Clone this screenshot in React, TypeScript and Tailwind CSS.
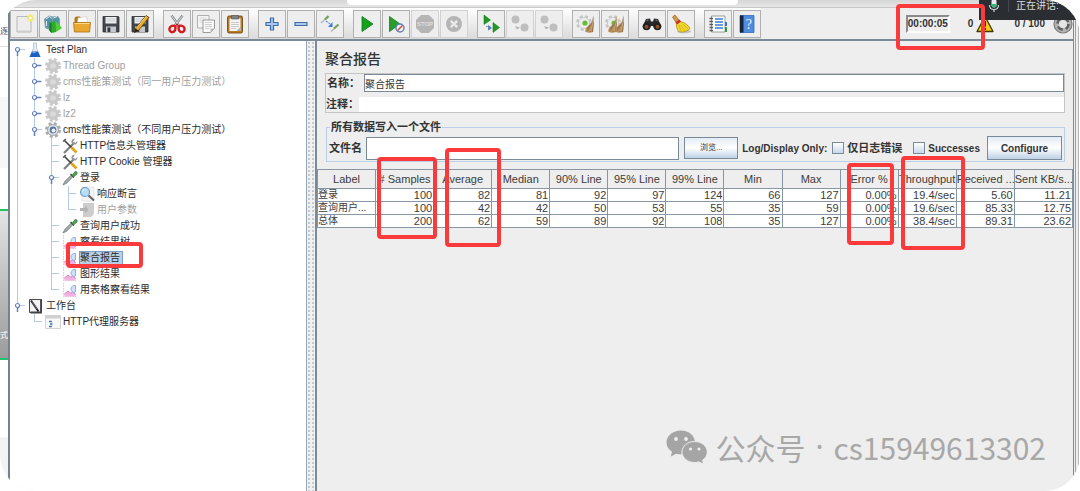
import React, { useState } from "react";

type IconName =
  | "new" | "templates" | "open" | "save" | "saveAs" | "cut" | "copy" | "paste"
  | "plus" | "minus" | "toggle" | "play" | "playNow" | "stop" | "shutdown"
  | "remoteStart" | "remoteStop" | "remoteShutdown" | "clear" | "clearAll"
  | "search" | "broom" | "functions" | "help";

type TreeIconName = "flask" | "gearOff" | "gear" | "tools" | "pipette" | "magnifier" | "pageOff" | "chart" | "bench" | "server";

type TreeNode = {
  label: string;
  icon: TreeIconName;
  // one char per level: "|" line, "t" tee, "e" elbow, "c" closed handle, f/o/l open handle (first, middle, last)
  guides: string;
  disabled?: boolean;
};

const toolbarGroups: { name: IconName; label: string; disabled?: boolean }[][] = [
  [
    { name: "new", label: "New" },
    { name: "templates", label: "Templates" },
    { name: "open", label: "Open" },
    { name: "save", label: "Save" },
    { name: "saveAs", label: "Save as" },
  ],
  [
    { name: "cut", label: "Cut" },
    { name: "copy", label: "Copy" },
    { name: "paste", label: "Paste" },
  ],
  [
    { name: "plus", label: "Expand all" },
    { name: "minus", label: "Collapse all" },
    { name: "toggle", label: "Toggle" },
  ],
  [
    { name: "play", label: "Start" },
    { name: "playNow", label: "Start no pauses" },
    { name: "stop", label: "Stop", disabled: true },
    { name: "shutdown", label: "Shutdown", disabled: true },
  ],
  [
    { name: "remoteStart", label: "Remote start all" },
    { name: "remoteStop", label: "Remote stop all", disabled: true },
    { name: "remoteShutdown", label: "Remote shutdown all", disabled: true },
  ],
  [
    { name: "clear", label: "Clear" },
    { name: "clearAll", label: "Clear all" },
  ],
  [
    { name: "search", label: "Search" },
    { name: "broom", label: "Reset search" },
  ],
  [
    { name: "functions", label: "Function helper" },
    { name: "help", label: "Help" },
  ],
];

const tree: TreeNode[] = [
  { label: "Test Plan", icon: "flask", guides: "f" },
  { label: "Thread Group", icon: "gearOff", guides: "|c", disabled: true },
  { label: "cms性能策测试（同一用户压力测试）", icon: "gearOff", guides: "|c", disabled: true },
  { label: "lz", icon: "gearOff", guides: "|c", disabled: true },
  { label: "lz2", icon: "gearOff", guides: "|c", disabled: true },
  { label: "cms性能策测试（不同用户压力测试）", icon: "gear", guides: "|l" },
  { label: "HTTP信息头管理器", icon: "tools", guides: "| t" },
  { label: "HTTP Cookie 管理器", icon: "tools", guides: "| t" },
  { label: "登录", icon: "pipette", guides: "| o" },
  { label: "响应断言", icon: "magnifier", guides: "| |t" },
  { label: "用户参数", icon: "pageOff", guides: "| |e", disabled: true },
  { label: "查询用户成功", icon: "pipette", guides: "| t" },
  { label: "察看结果树", icon: "chart", guides: "| t" },
  { label: "聚合报告", icon: "chart", guides: "| t" },
  { label: "图形结果", icon: "chart", guides: "| t" },
  { label: "用表格察看结果", icon: "chart", guides: "| e" },
  { label: "工作台", icon: "bench", guides: "l" },
  { label: "HTTP代理服务器", icon: "server", guides: " e" },
];

const columns = [
  "Label", "# Samples", "Average", "Median", "90% Line", "95% Line", "99% Line",
  "Min", "Max", "Error %", "Throughput", "Received ...", "Sent KB/s...",
];

const rows = [
  ["登录", "100", "82", "81", "92", "97", "124", "66", "127", "0.00%", "19.4/sec", "5.60", "11.21"],
  ["查询用户...", "100", "42", "42", "50", "53", "55", "35", "59", "0.00%", "19.6/sec", "85.33", "12.75"],
  ["总体", "200", "62", "59", "89", "92", "108", "35", "127", "0.00%", "38.4/sec", "89.31", "23.62"],
];

const Floppy = () => (
  <>
    <path d="M2 2.5h15.5l.5 1V18H2z" fill="#43474e" stroke="#2b2e33" strokeWidth=".8" />
    <path d="M4.5 3h11v6.500h-11z" fill="#eef0f2" />
    <path d="M5.5 5h9M5.5 7h9" stroke="#b9bdc2" strokeWidth=".8" />
    <path d="M5 12.5h10V18H5z" fill="#c4c8cd" />
    <path d="M6.5 13.5h2.8V18H6.5z" fill="#33373d" />
  </>
);

const PaleGear = () => (
  <>
    <circle cx="8" cy="9" r="6.2" fill="none" stroke="#c3c6c9" strokeWidth="3.4" strokeDasharray="2.8 2.1" />
    <circle cx="8" cy="9" r="5.6" fill="#eceded" stroke="#c0c3c6" strokeWidth=".7" />
    <circle cx="9" cy="9" r="2.6" fill="#69bb3c" />
  </>
);

const Bristles = () => (
  <>
    <path d="M18 1c-.5 3.500-1 5.500-2.500 7.500L10 14l-1 3.500c2.5 1.500 5.500 1.500 8 .5L18 9z" fill="#b9905f" />
    <path d="M17.500 3l-1.500 6-5 8M17 9l-3 9M17.500 8l-1 10M14 11l-3 4" stroke="#80603c" strokeWidth=".6" fill="none" />
    <path d="M17.500 2l-.5 7-2.500 8" stroke="#dfc19a" strokeWidth=".7" fill="none" />
  </>
);

const RemoteDots = () => (
  <>
    <circle cx="5.5" cy="5.5" r="4" fill="#bfbfbf" />
    <circle cx="14.5" cy="13.5" r="4" fill="#bfbfbf" />
    <path d="M5 12l5 1.5-3 2z" fill="#b5b5b5" />
  </>
);

const toolIcons: Record<IconName, React.ReactNode> = {
  new: (
    <>
      <path d="M3 2.5h14V18H3z" fill="#ededee" stroke="#b0b1b2" strokeWidth=".9" />
      <path d="M4.5 17h11" stroke="#c9cacb" />
      <circle cx="16.5" cy="4" r="3.2" fill="#f6ee9a" />
      <path d="M16.5 0v8M12.5 4h8M14 1.5l5 5M19 1.5l-5 5" stroke="#ecdf5c" strokeWidth=".8" />
      <circle cx="16.5" cy="4" r="1.3" fill="#fffde2" />
    </>
  ),
  templates: (
    <>
      <path d="M1 5l5-3.500 4 1L15 2l2 3v9l-6 4-9-4z" fill="#7f9ea6" />
      <path d="M2 5.500L6.500 3 9 5v10l-6-2zM10 5l4-2 2 2-1 8-5 1z" fill="#4f93ad" />
      <path d="M3 5l3.500-2.500L8.500 4M10.500 4L14 2.500M3.500 7v5" stroke="#d8eef3" fill="none" />
      <path d="M6.500 8.500L11 7l2 1.500V18l-4.500 1-2-2.500z" fill="#2fa82c" />
      <path d="M12.500 7l3 3 3.500 4-6 4z" fill="#4fce3b" />
      <path d="M6.500 8.500l2 1.500v9l-2-2.500z" fill="#187a24" />
    </>
  ),
  open: (
    <>
      <path d="M2.5 6V4L4 2.5h4L9.5 4H15v11H2.5z" fill="#b3781b" />
      <path d="M6 4l8.500-1.500L16 11 5 12z" fill="#fff" stroke="#c3c3c3" strokeWidth=".5" />
      <path d="M1.5 8.5h17l-1 9.500h-15z" fill="#e9a930" stroke="#a86e12" strokeWidth=".8" />
      <path d="M2.5 9.5h15" stroke="#ffdc86" />
    </>
  ),
  save: <Floppy />,
  saveAs: (
    <>
      <Floppy />
      <path d="M5.5 14.5L16 1.5l3 2-10.500 13-4 2z" fill="#e9aa23" stroke="#4d3a12" strokeWidth=".8" />
      <path d="M5.5 14.5l3 2-4 2z" fill="#222" />
      <path d="M6.5 14l10-12" stroke="#ffe28a" strokeWidth=".8" />
    </>
  ),
  cut: (
    <>
      <path d="M4.5 1.5L13 13M15.5 1.5L7 13" stroke="#85898d" strokeWidth="2.4" />
      <path d="M4.5 1.5l7 9.500M15.5 1.5l-7 9.500" stroke="#dfe2e4" strokeWidth=".9" />
      <path d="M8.5 12.5c-2-1.500-5.500-1-6 2s2.500 4.500 4.500 3 1.200-3 1.500-5zM11.500 12.500c2-1.500 5.500-1 6 2s-2.500 4.500-4.500 3-1.200-3-1.500-5z" fill="none" stroke="#d6191f" strokeWidth="2.4" />
      <circle cx="10" cy="10.500" r="1" fill="#b0151a" />
    </>
  ),
  copy: (
    <>
      <path d="M1.5 1.5H13V14H1.5z" fill="#f5f5f5" stroke="#a5a7a9" strokeWidth=".9" />
      <path d="M3.5 4h7M3.5 6h4M3.5 8h3" stroke="#cfd1d3" strokeWidth=".8" />
      <path d="M7 6h11.500v8.500l-4 4H7z" fill="#fafafa" stroke="#8e9092" strokeWidth=".9" />
      <path d="M9 8.5h7M9 10.5h7M9 12.5h7M9 14.5h4.500" stroke="#c0c2c4" strokeWidth=".8" />
      <path d="M18.5 14.5h-4v4z" fill="#b9bbbd" />
    </>
  ),
  paste: (
    <>
      <rect x="2.5" y="2" width="15" height="17" rx="1.5" fill="#b97b25" stroke="#744910" strokeWidth=".9" />
      <path d="M4.5 4.500h11V17h-11z" fill="#f4f4f4" />
      <path d="M6 8.5h8M6 10.5h8M6 12.5h8M6 14.5h5" stroke="#bcbfc2" strokeWidth=".8" />
      <path d="M11.5 17l4-4v4z" fill="#aab0b6" />
      <path d="M6.5 1.5h7V5h-7z" fill="#7d8187" stroke="#4f5257" strokeWidth=".6" />
    </>
  ),
  plus: <path d="M8.5 4h3v4.500H16v3h-4.500V16h-3v-4.500H4v-3h4.500z" fill="#a9c8ee" stroke="#3f6ea8" strokeWidth="1.2" />,
  minus: <path d="M4 8.5h12v3H4z" fill="#a9c8ee" stroke="#3f6ea8" strokeWidth="1.2" />,
  toggle: (
    <>
      <path d="M1 9l5-4.500" stroke="#b5b9bb" strokeWidth="1.500" />
      <path d="M5 5.500L8.5 2" stroke="#74a162" strokeWidth="2.400" />
      <path d="M11 17.500l4-3.500" stroke="#b5b9bb" strokeWidth="1.500" />
      <path d="M14 14.500l4.500-4" stroke="#74a162" strokeWidth="2.200" />
      <path d="M6 7l5 3.500" stroke="#5b93df" strokeWidth="1.200" strokeDasharray="2 1" />
      <path d="M12.500 8v5H8z" fill="#3a7bd9" />
    </>
  ),
  play: <path d="M5 2.5L16 10 5 17.5z" fill="#17a01a" stroke="#0d7a12" strokeWidth=".8" />,
  playNow: (
    <>
      <path d="M3.5 2.5L14 10 3.5 17.5z" fill="#2a9e2c" stroke="#147a19" strokeWidth=".8" />
      <circle cx="14" cy="14" r="4" fill="#f3f3f3" stroke="#5b7fb8" strokeWidth="1.4" />
      <path d="M11.500 16.500l5-5" stroke="#d54343" strokeWidth="1.500" />
    </>
  ),
  stop: (
    <>
      <path d="M6 1h8l5 5v8l-5 5H6l-5-5V6z" fill="#b5b5b5" />
      <text x="10" y="12.300" textAnchor="middle" fontSize="6" fontWeight="700" fill="#dedede" fontFamily="Liberation Sans, sans-serif">STOP</text>
    </>
  ),
  shutdown: (
    <>
      <circle cx="10" cy="10" r="8" fill="#b5b5b5" />
      <path d="M6.8 6.8l6.400 6.400M13.200 6.800l-6.400 6.400" stroke="#e9e9e9" strokeWidth="2.400" />
    </>
  ),
  remoteStart: (
    <>
      <path d="M3 1l6.500 5L3 10.500z" fill="#1f9a22" stroke="#0d6c12" strokeWidth=".5" />
      <path d="M12 8.500l6.500 5-6.500 5z" fill="#1f9a22" stroke="#0d6c12" strokeWidth=".5" />
      <path d="M5 12.500h3M7.500 11.500l3 2.500-3 2z" fill="#4a78bd" stroke="#4a78bd" strokeWidth=".7" />
    </>
  ),
  remoteStop: <RemoteDots />,
  remoteShutdown: <RemoteDots />,
  clear: (
    <>
      <PaleGear />
      <Bristles />
    </>
  ),
  clearAll: (
    <>
      <PaleGear />
      <g transform="translate(-6 0)">
        <Bristles />
      </g>
      <g transform="translate(1 0)">
        <Bristles />
      </g>
    </>
  ),
  search: (
    <>
      <path d="M4 5l4-.5 1 3h2l1-3 4 .5 3.500 7.500-7 2.500-1.500-3H9L7.500 15l-7-2.500z" fill="#29292b" />
      <circle cx="4.500" cy="12.500" r="3.800" fill="#202022" />
      <circle cx="15.500" cy="12.500" r="3.800" fill="#202022" />
      <circle cx="4.500" cy="12.800" r="2" fill="#8a4f29" />
      <circle cx="15.500" cy="12.800" r="2" fill="#8a4f29" />
      <path d="M4.500 6.500l2-.5M13.500 6l2 .5" stroke="#88898c" />
    </>
  ),
  broom: (
    <>
      <ellipse cx="13" cy="17.500" rx="7" ry="1.800" fill="#c3c3c3" />
      <path d="M1.500 3L4 1l4 5-3 2.500z" fill="#d19a45" stroke="#86581b" strokeWidth=".6" />
      <path d="M8 7.500c4 0 9 3 11 7-2 2.500-6 4-10.500 3.500C6 16 5 13 5.500 9.500z" fill="#f3d62c" stroke="#a88809" strokeWidth=".7" />
      <path d="M10 11l4 6M12 10l5 5M8 11l2 6" stroke="#d0ae18" strokeWidth=".8" />
      <path d="M4.500 8.500l4-3 1.500 2-4 3z" fill="#cf2c20" />
    </>
  ),
  functions: (
    <>
      <path d="M3.500 2H17v16H3.500z" fill="#fff" stroke="#8b8f94" strokeWidth=".9" />
      <path d="M18 8v4" stroke="#3b73d4" strokeWidth="2" />
      <path d="M18 13v5" stroke="#2c9b3c" strokeWidth="2" />
      <path d="M7 5h8M7 8h8M7 11h8M7 14h8" stroke="#3d79d4" strokeWidth="1.300" />
      <path d="M1.500 4.500H5M1.500 7.500H5M1.500 10.500H5M1.500 13.500H5M1.500 16.500H5" stroke="#55585c" strokeWidth="1.400" />
    </>
  ),
  help: (
    <>
      <path d="M3 1.500h14v17H3z" fill="#4f8cde" stroke="#2a5fae" strokeWidth=".7" />
      <path d="M3 1.500h3.500v17H3z" fill="#17243b" />
      <text x="11.800" y="15" textAnchor="middle" fontSize="14" fill="#e7f1ff" fontFamily="Liberation Serif, serif">?</text>
    </>
  ),
};

const Gear = ({ color, hub }: { color: string; hub: string }) => (
  <>
    <circle cx="8" cy="8" r="6.5" fill="none" stroke={color} strokeWidth="3" strokeDasharray="2.9 2.2" />
    <circle cx="8" cy="8" r="6" fill={color} />
    <circle cx="8" cy="8" r="2.800" fill={hub} />
  </>
);

const treeIcons: Record<TreeIconName, React.ReactNode> = {
  flask: (
    <>
      <path d="M5.500 1h3v5l3.500 8.500H2L5.500 6z" fill="#e4ecf4" stroke="#a9b8c8" strokeWidth=".7" />
      <path d="M4 9.500h6l2.500 5.500h-11z" fill="#1c62c4" />
      <path d="M4.500 10.500h3" stroke="#78b3f5" />
    </>
  ),
  gearOff: <Gear color="#c9c9c9" hub="#dadada" />,
  gear: (
    <>
      <Gear color="#a9acb0" hub="#fff" />
      <circle cx="8" cy="8" r="4.800" fill="#e8ebef" />
      <circle cx="8" cy="8" r="3.400" fill="#55779f" />
      <circle cx="8.500" cy="8.500" r="2" fill="#eef3fa" />
    </>
  ),
  tools: (
    <>
      <path d="M2 15L12.500 4.500" stroke="#7f8387" strokeWidth="2.300" />
      <path d="M15.500 3l-3 2.500-1.500-2L13 .8c-2.500-.5-4 1.500-3.500 4l2.500 1.500c2 .5 3.700-1 3.500-3.300z" fill="#94989c" />
      <path d="M2 2l7.500 7.500" stroke="#3d4044" strokeWidth="1.600" />
      <path d="M9.500 9.500l5 5" stroke="#e3a41b" strokeWidth="2.800" />
      <path d="M1 3.500L4 1" stroke="#54575b" strokeWidth="1.200" />
    </>
  ),
  pipette: (
    <>
      <path d="M1 15l2-4 7-6.500 1.500 1.500L5 13z" fill="#a5aaac" stroke="#6d7376" strokeWidth=".7" />
      <path d="M8.500 4l3.500 3.500" stroke="#3a4a3a" strokeWidth="1.400" />
      <path d="M10 5.500l3-4 2 .5v2L11.500 7z" fill="#4fa653" stroke="#2f7335" strokeWidth=".7" />
    </>
  ),
  magnifier: (
    <>
      <path d="M3 1h12v14H3z" fill="#f4f4f4" stroke="#d9d9d9" strokeWidth=".6" />
      <path d="M9.500 9.500l5.500 5" stroke="#5e6164" strokeWidth="2" />
      <circle cx="6" cy="6" r="4.500" fill="#b7dcf5" stroke="#6d9fc6" strokeWidth="1.200" />
      <path d="M3.500 5.500c.5-1.500 1.500-2 3-2" stroke="#fff" fill="none" />
    </>
  ),
  pageOff: (
    <>
      <path d="M4 1h11v11l-3 3H4z" fill="#cdcdcd" />
      <path d="M1 6h5V3.500l3.500 4-3.500 4V9H1z" fill="#b3b3b3" />
    </>
  ),
  chart: (
    <>
      <path d="M1.500 1v13.500H14" stroke="#c3c3c3" strokeWidth=".8" strokeDasharray="1.500 1" fill="none" />
      <path d="M2 14.500l1.500-3L6 9l3 2.500 2-2.500 3 5.500z" fill="#f3b2e2" />
      <path d="M2 12.500L6 9l3 2.500 2-2.500 2.500 4" stroke="#cf7cc4" fill="none" />
      <path d="M13.500 3.500c-2.500-.5-4.500 1-4.500 3.500s2 4 4.500 3z" fill="#cfe0f7" stroke="#86abdf" strokeWidth=".9" />
    </>
  ),
  bench: (
    <>
      <path d="M1.500 1.500h12v13h-12z" fill="#f2f2f2" stroke="#35383c" strokeWidth=".9" />
      <path d="M13 1.500v13H2.500" stroke="#404348" strokeWidth="1.800" fill="none" />
      <path d="M3 2.500l7.500 11" stroke="#24272b" strokeWidth="2" />
      <path d="M4 3.500l5 7.500" stroke="#9aa0a6" strokeWidth=".6" />
    </>
  ),
  server: (
    <>
      <path d="M.5 1.500h15v13H.5z" fill="#f8f8f8" stroke="#c9c9c9" strokeWidth=".8" />
      <path d="M.5 1.500h15v3H.5z" fill="#cfd0d1" />
      <path d="M4 7.500h3M5 10h2.500M4 12.500h3" stroke="#3b73c8" strokeWidth="1.600" />
    </>
  ),
};

const Guide = ({ kind }: { kind: string }) => {
  const up = "|teclo".includes(kind);
  const down = "|tcfo".includes(kind);
  const across = "tecflo".includes(kind);
  const open = "flo".includes(kind);
  return (
    <svg width="17" height="16" viewBox="0 0 17 16" className="shrink-0" aria-hidden="true">
      {up && <path d="M6.500 0v8" stroke="#b3cae2" />}
      {down && <path d="M6.500 8v8" stroke="#b3cae2" />}
      {across && <path d="M6.500 7.500H14" stroke="#b3cae2" />}
      {open && <path d="M6.500 8v6" stroke="#6483b8" strokeWidth="1.500" />}
      {kind === "c" && <path d="M7 7.500h6" stroke="#6483b8" strokeWidth="1.500" />}
      {(open || kind === "c") && <circle cx="6.500" cy="7.500" r="2" fill="#fff" stroke="#6483b8" strokeWidth="1.200" />}
    </svg>
  );
};

const Toolbar = () => (
  <div className="flex h-8 items-center justify-between border-t border-[#c9c9c9] bg-[#eeeeee]">
    <div className="flex h-full items-center gap-[9px] bg-linear-to-b from-white to-[#dadada]">
      {toolbarGroups.map((group, i) => (
        <div key={i} className="flex gap-px">
          {group.map((tool) => (
            <button
              key={tool.name}
              aria-label={tool.label}
              disabled={tool.disabled}
              className={`flex size-7 items-center justify-center border bg-[#eeeeee] ${tool.disabled ? "border-[#d2d2d2]" : "border-[#b0b0b0]"}`}
            >
              <svg width="20" height="20" viewBox="0 0 20 20" fill="none">
                {toolIcons[tool.name]}
              </svg>
            </button>
          ))}
        </div>
      ))}
    </div>
    <div className="flex items-center text-[10px] font-bold text-[#333333]">
      <span className="mr-[18px] border-2 border-r-white border-b-white border-t-[#8a8a8a] border-l-[#8a8a8a] py-px leading-3">
        00:00:05
      </span>
      <span>0</span>
      <svg width="18" height="18" viewBox="0 0 18 18" className="mr-5 ml-[3px]" aria-hidden="true">
        <path d="M9 1.500l8 15H1z" fill="#f5cd12" stroke="#3d3608" strokeWidth="1.300" strokeLinejoin="round" />
        <path d="M9 6v5.500M9 13v2" stroke="#222" strokeWidth="1.800" />
      </svg>
      <span>0 / 100</span>
      <svg width="20" height="20" viewBox="0 0 20 20" className="ml-2" aria-hidden="true">
        <circle cx="10" cy="10" r="9" fill="#b3b3b3" stroke="#7c7c7c" strokeWidth="1.200" />
        <circle cx="10" cy="10" r="5.500" fill="none" stroke="#5e5e5e" strokeWidth="2.500" strokeDasharray="5.600 3.040" />
        <circle cx="10" cy="10" r="4" fill="#e4e4e4" />
      </svg>
    </div>
  </div>
);

const TestTree = ({ selected, onSelect }: { selected: string; onSelect: (label: string) => void }) => (
  <nav className="w-[297px] shrink-0 border-r border-[#9aa7b3] bg-white pt-px pl-px">
    <ul>
      {tree.map((node) => (
        <li key={node.label} className="flex h-4 items-center">
          {node.guides.split("").map((kind, i) => (
            <Guide key={i} kind={kind} />
          ))}
          <svg width="16" height="16" viewBox="0 0 16 16" fill="none" className="shrink-0" aria-hidden="true">
            {treeIcons[node.icon]}
          </svg>
          <button
            onClick={() => onSelect(node.label)}
            className={`ml-px border pr-0.5 text-[10px] leading-3 whitespace-nowrap ${
              selected === node.label ? "border-[#7d9cc4] bg-[#b8cfe5]" : "border-transparent"
            } ${node.disabled ? "text-[#a0a0a0]" : "text-[#2b2b2b]"}`}
          >
            {node.label}
          </button>
        </li>
      ))}
    </ul>
  </nav>
);

const checkboxClass = "size-3 appearance-none border border-[#7a8a99] bg-linear-to-b from-white to-[#c6d8ea] checked:bg-[#6382bf]";
const buttonClass = "border border-[#7a8a99] bg-linear-to-b from-[#e3ecf5] via-white to-[#bdd1e6] text-[#333333]";

const ReportPanel = () => (
  <main className="min-w-0 flex-1 border-l-2 border-[#7a8a99] bg-[#eeeeee]">
    <div className="px-2">
      <h1 className="h-8 pt-1 text-[14px] leading-7 font-medium text-[#333333]">聚合报告</h1>
      <div className="flex flex-col gap-[5px] border border-[#c4c4c4] text-[11px] font-bold text-[#333333]">
        <div className="flex h-[18px] items-center">
          <label htmlFor="name" className="w-[38px] shrink-0 pl-px whitespace-nowrap">名称：</label>
          <input id="name" defaultValue="聚合报告" className="h-full min-w-0 flex-1 border border-[#7a8a99] bg-white text-[10px] font-normal outline-none" />
        </div>
        <div className="flex h-[15px] items-center">
          <label htmlFor="comment" className="w-[33px] shrink-0 whitespace-nowrap">注释：</label>
          <input id="comment" className="h-full min-w-0 flex-1 bg-white text-[10px] font-normal outline-none" />
        </div>
      </div>
      <fieldset className="mt-[7px] ml-px min-w-0 border border-[#b8cfe5] pt-0.5 pb-px text-[#333333]">
        <legend className="ml-[3px] px-px text-[11px] leading-[14px] font-bold">所有数据写入一个文件</legend>
        <div className="flex h-6 items-center text-[10px] font-bold whitespace-nowrap">
          <label htmlFor="file" className="w-[39px] shrink-0 pl-0.5 text-[11px]">文件名</label>
          <input id="file" className="h-[23px] min-w-0 flex-1 border border-[#7a8a99] bg-white font-normal outline-none" />
          <button className={`ml-[5px] h-[22px] w-[54px] text-[8px] font-normal ${buttonClass}`}>浏览...</button>
          <span className="ml-1">Log/Display Only:</span>
          <input id="errors" type="checkbox" className={`ml-[5px] ${checkboxClass}`} />
          <label htmlFor="errors" className="ml-[3px] text-[11px]">仅日志错误</label>
          <input id="successes" type="checkbox" className={`ml-[11px] ${checkboxClass}`} />
          <label htmlFor="successes" className="ml-[3px]">Successes</label>
          <button className={`mr-0.5 ml-[7px] h-6 w-[75px] ${buttonClass}`}>Configure</button>
        </div>
      </fieldset>
    </div>
    <table className="mt-[7px] w-full table-fixed border-collapse text-[11px] text-[#3c3c3c]">
      <thead>
        <tr className="h-[19px]">
          {columns.map((col) => (
            <th key={col} className="border border-[#8796a5] p-0 text-center leading-4 font-normal whitespace-nowrap">{col}</th>
          ))}
        </tr>
      </thead>
      <tbody className="bg-white">
        {rows.map((row) => (
          <tr key={row[0]} className="h-[13px]">
            {row.map((cell, i) => (
              <td key={i} className={`border border-[#8796a5] p-0 leading-3 whitespace-nowrap ${i === 0 ? "text-left text-[10px]" : "pr-px text-right"}`}>
                {cell}
              </td>
            ))}
          </tr>
        ))}
      </tbody>
    </table>
  </main>
);

// sliver of the page that lies behind the window
const BackgroundEdge = () => (
  <div className="flex w-2 shrink-0 flex-col bg-white text-[8px] leading-3">
    <div className="flex h-[46px] items-end pb-2 text-[#44506a]">逐</div>
    <div className="h-[51px] border-t border-[#dddddd]" />
    <div className="h-[71px] bg-[#f7f7f7]" />
    <div className="h-[41px]" />
    <div className="flex h-[151px] items-end border-y-2 border-[#22c26b] bg-linear-to-b from-[#e4e4e4] to-[#9b9b9b] pb-4 text-white">式</div>
    <div className="h-[77px]" />
    <div className="flex-1 bg-[#f3f3f3]" />
  </div>
);

const highlights = [
  "left-[896px] top-1 w-[89px] h-[46px]",
  "left-[66px] top-[242px] w-[77px] h-[26px]",
  "left-[377px] top-[157px] w-[60px] h-[82px]",
  "left-[445px] top-[148px] w-[56px] h-[99px]",
  "left-[847px] top-[163px] w-[47px] h-[82px]",
  "left-[901px] top-[156px] w-[64px] h-[94px]",
];

const App: React.FC = () => {
  const [selected, setSelected] = useState("聚合报告");

  return (
    <div className="bg-white">
      <div className="relative flex min-h-screen overflow-hidden rounded-[36px] font-['Liberation_Sans','Noto_Sans_CJK_SC',sans-serif]">
        <BackgroundEdge />
        <div className="flex min-w-0 flex-1 flex-col border-l-2 border-[#76828e] bg-[#eeeeee]">
          <div className="h-[7px] bg-linear-to-b from-[#d6d6d6] to-[#e6e6e6]">
            <div className="ml-[337px] h-[5px] w-[391px] rounded-b-sm bg-white" />
          </div>
          <Toolbar />
          <div className="flex flex-1 border-t-2 border-[#7a8a99]">
            <TestTree selected={selected} onSelect={setSelected} />
            <div className="w-2 shrink-0 bg-[#f1f1f1] bg-[radial-gradient(#c3cad1_1px,transparent_1px)] bg-[size:4px_4px]" />
            <ReportPanel />
          </div>
        </div>
        <div className="mt-5 w-[7px] shrink-0 border-l border-[#7a8a99] bg-white">
          <div className="h-full w-[5px] border-x border-r-[#b5b5b5] border-l-transparent bg-[#eeeeee]">
            <div className="h-full w-px bg-[#94a2b0]" />
          </div>
        </div>

        <div className="absolute top-0 right-0 flex h-5 w-[101px] items-center bg-[#2a2d32] text-[10px] text-[#d8dade]">
          <svg width="12" height="16" viewBox="0 0 12 16" className="mb-2 ml-[9px]" fill="none" aria-hidden="true">
            <rect x="3.500" y="1" width="5" height="8.500" rx="2.500" fill="#e6e8ea" />
            <path d="M3.500 6h5v1a2.500 2.500 0 01-5 0z" fill="#35b87a" />
            <path d="M1.500 7c0 6 9 6 9 0M6 11.500V14" stroke="#cfd2d5" strokeWidth="1.200" />
          </svg>
          <span className="mr-[7px] ml-2 h-3 self-start border-l border-[#45484e]" />
          <span className="self-start leading-3 whitespace-nowrap">正在讲话:</span>
        </div>

        {highlights.map((box) => (
          <div key={box} className={`pointer-events-none absolute rounded-[4px] border-4 border-[#fb3b3b] ${box}`} />
        ))}

        <div className="pointer-events-none absolute right-[34px] bottom-6 flex items-center text-[30px] leading-10 whitespace-nowrap text-[#a8a8a8]">
          <svg width="42" height="34" viewBox="0 0 42 34" className="mr-[7px]" fill="#a5a5a5" aria-hidden="true">
            <path d="M15 .5C7 .5.5 5.800.5 12.500c0 3.800 2 7 5.500 9.200l-1.200 4.800 5.400-2.800c1.500.4 3.200.6 4.800.6 8 0 14-5.300 14-11.800S23 .5 15 .5z" />
            <path d="M28.500 11.500C21.500 11.500 16 16.200 16 22s5.500 10.500 12.500 10.500c1.500 0 2.800-.2 4.200-.6l5 2.400-1.200-4c3-2 4.800-5 4.800-8.300 0-5.800-5.600-10.500-12.800-10.500z" stroke="#eeeeee" strokeWidth="1" />
            <g fill="#eeeeee">
              <circle cx="10" cy="9" r="1.900" />
              <circle cx="20" cy="9" r="1.900" />
              <circle cx="24.500" cy="19" r="1.600" />
              <circle cx="33" cy="19" r="1.600" />
            </g>
          </svg>
          <p className="flex gap-2.5 font-['Noto_Sans_CJK_SC',sans-serif]">
            <span>公众号</span>
            <span className="font-['Noto_Sans',sans-serif]">·</span>
            <span>cs15949613302</span>
          </p>
        </div>
      </div>
    </div>
  );
};

export default App;
